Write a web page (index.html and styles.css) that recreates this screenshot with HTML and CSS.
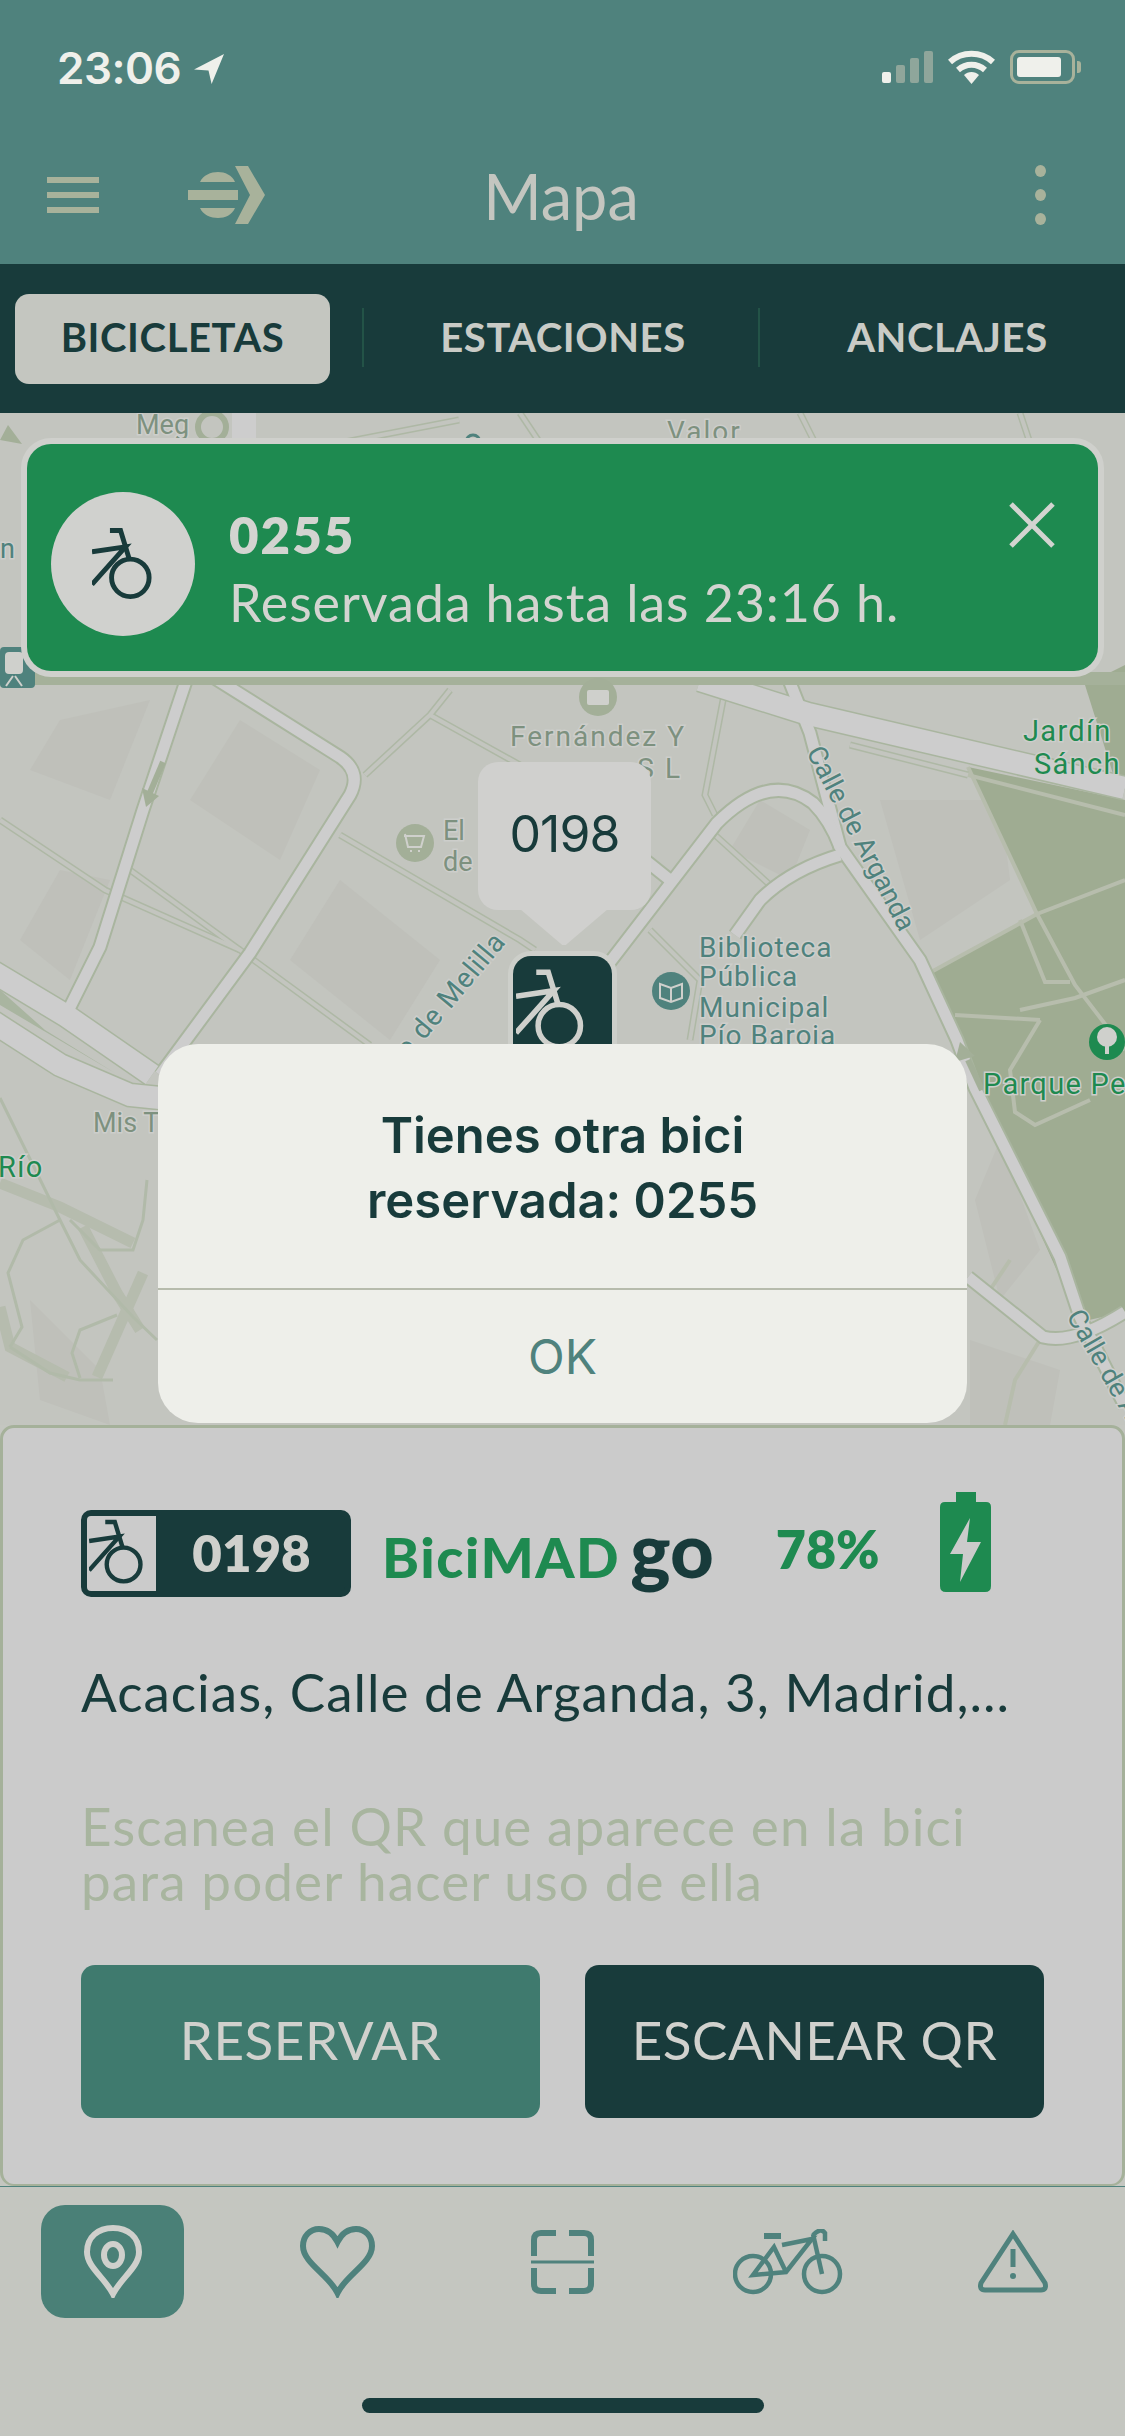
FILE: index.html
```html
<!DOCTYPE html>
<html lang="es">

<head>
    <meta charset="UTF-8">
    <meta name="viewport" content="width=device-width, initial-scale=1.0">
    <title>BiciMAD - Mapa</title>
    <link rel="stylesheet" href="styles.css">
</head>

<body>
    <svg class="defs" width="0" height="0">
        <symbol id="bike-glyph" viewBox="0 0 76 90">
            <path d="M22 4H35L46 40" fill="none" stroke="currentColor" stroke-width="6" />
            <path d="M0 30L41 24L0 70" fill="none" stroke="currentColor" stroke-width="6" />
            <circle cx="47" cy="62" r="23" fill="none" stroke="currentColor" stroke-width="6" />
        </symbol>
    </svg>

    <div class="screen">
        <header class="topbar">
            <div class="status">
                <div class="status-time">
                    <span>23:06</span>
                    <svg width="31" height="31" viewBox="0 0 30 30">
                        <path d="M30 1L1 16L15 17L18 30Z" fill="#eff0eb" />
                    </svg>
                </div>
                <div class="status-icons">
                    <svg width="51" height="32" viewBox="0 0 51 32">
                        <rect x="0" y="21" width="9" height="11" rx="2" fill="#eff0eb" />
                        <rect x="14" y="14" width="9" height="18" rx="2" fill="#8fa69b" />
                        <rect x="28" y="7" width="9" height="25" rx="2" fill="#8fa69b" />
                        <rect x="42" y="0" width="9" height="32" rx="2" fill="#8fa69b" />
                    </svg>
                    <svg width="47" height="34" viewBox="0 0 47 34">
                        <path d="M2 12C14 1 33 1 45 12" fill="none" stroke="#eff0eb" stroke-width="6" />
                        <path d="M10 20C18 13 29 13 37 20" fill="none" stroke="#eff0eb" stroke-width="6" />
                        <path d="M16 25C20 21 27 21 31 25L23.500 34Z" fill="#eff0eb" />
                    </svg>
                    <div class="battery-top"><span class="battery-level"></span></div>
                </div>
            </div>
            <div class="titlebar">
                <div class="burger"><span></span><span></span><span></span></div>
                <svg class="logo" width="77" height="58" viewBox="0 0 77 58">
                    <path d="M12 16C15 9 23 6 30 6C37 6 44 9 47 16Z" fill="#a8b29b" />
                    <path d="M0 24H50V34H0Z" fill="#a8b29b" />
                    <path d="M12 42H47C44 49 37 52 30 52C23 52 15 49 12 42Z" fill="#a8b29b" />
                    <path d="M47 0H60L77 29L60 58H47L62 29Z" fill="#a8b29b" />
                </svg>
                <h1 class="title">Mapa</h1>
                <div class="dots"><span></span><span></span><span></span></div>
            </div>
        </header>

        <nav class="tabs">
            <div class="tab tab-active">BICICLETAS</div>
            <div class="tab tab-mid">ESTACIONES</div>
            <div class="tab tab-last">ANCLAJES</div>
        </nav>

        <main class="map">
            <svg class="map-canvas" viewBox="0 413 1125 1012" width="1125" height="1012">
                <defs>
                    <g id="roads-wide">
                        <path d="M700 680L808 714L1125 788" />
                        <path d="M-10 970L65 1015L152 1075" />
                        <path d="M-10 1020L60 1065L130 1095L160 1098" />
                    </g>
                    <g id="roads-mid">
                        <path d="M188 675L143 810L100 947L70 1007" />
                        <path d="M205 672L340 757Q362 772 350 795L250 953L160 1075" />
                        <path d="M787 675L810 733L840 847L920 960L957 1040L975 1088L1060 1257L1080 1317L1125 1406" />
                        <path d="M600 975L717 823Q770 770 813 803Q830 820 840 847" />
                        <path d="M840 855Q790 870 760 900L735 935" />
                        <path d="M645 860L670 880" />
                        <path d="M968 1277L1043 1337Q1073 1345 1125 1312" />
                        <path d="M244 413V444" stroke-width="24" />
                        <path d="M600 1000L520 1100" />
                    </g>
                    <g id="roads-minor">
                        <path d="M0 820L105 890L240 950L370 1045" />
                        <path d="M130 870L240 950" />
                        <path d="M340 835L520 940L535 950" />
                        <path d="M365 775L430 715L450 690" />
                        <path d="M430 715L520 765" />
                        <path d="M725 690L705 795L715 815" />
                        <path d="M715 835L770 885" />
                        <path d="M650 930L700 980L690 1040" />
                        <path d="M850 745L968 775" />
                        <path d="M340 443L459 420" />
                        <path d="M520 413L540 443" />
                        <path d="M1020 413L1030 443" />
                        <path d="M800 413L815 443" />
                    </g>
                </defs>

                <rect x="0" y="413" width="1125" height="1012" fill="#c3c5bf" />

                <polygon class="building" points="60,720 150,700 110,800 30,770" />
                <polygon class="building" points="240,720 320,770 280,860 190,800" />
                <polygon class="building" points="60,870 110,880 70,980 20,940" />
                <polygon class="building" points="340,880 440,960 390,1040 290,960" />
                <polygon class="building" points="760,800 810,830 790,880 730,850" />
                <polygon class="building" points="880,800 1000,800 1010,880 920,940" />
                <polygon class="building" points="1000,1140 1040,1250 1000,1300 975,1200" />
                <polygon class="building" points="970,1340 1060,1370 1050,1425 970,1425" />
                <polygon class="building" points="30,1300 100,1370 110,1425 40,1400" />

                <polygon class="park" points="968,767 1125,800 1125,1312 1080,1322 975,1088 933,971 1037,914" />
                <polygon class="park" points="1085,685 1125,665 1125,790 1115,780" />

                <path class="park-path" d="M850 745L1125 815" />
                <path class="park-path" d="M968 767L1037 914L1075 985L1125 1050" />
                <path class="park-path" d="M933 971L1037 914L1125 880" />
                <path class="park-path" d="M1020 1010L1075 998L1125 980" />
                <path class="park-path" d="M955 1015L1040 1020" />
                <path class="park-path" d="M1040 1020L1010 1070L1015 1112L1035 1125L1090 1100" />
                <path class="park-path" d="M1020 920L1045 982H1070" />
                <path class="park-path" d="M1010 1260L990 1290" />
                <path class="park-path" d="M1040 1340L1015 1380L1005 1425" />

                <path class="strip" d="M0 1183L60 1207L133 1243" />
                <path class="strip" d="M83 1227L117 1293L140 1330" />
                <path class="strip" d="M143 1273L97 1377" />
                <path class="strip" d="M0 1307L10 1347L67 1377" />
                <path class="thin" d="M0 1098L60 1220L80 1260L133 1317L157 1340" />
                <path class="thin" d="M60 1220L23 1240L8 1273L22 1327L10 1347" />
                <path class="thin" d="M70 1220L100 1250L133 1250L143 1220L147 1180" />
                <path class="thin" d="M117 1315L80 1330L72 1353L80 1378" />
                <path class="thin" d="M10 1347L50 1373L80 1380L113 1380" />

                <use href="#roads-minor" class="road-minor-casing" />
                <use href="#roads-minor" class="road-minor" />
                <use href="#roads-mid" class="road-casing road-casing-mid" />
                <use href="#roads-wide" class="road-casing road-casing-wide" />
                <use href="#roads-mid" class="road road-mid" />
                <use href="#roads-wide" class="road road-wide" />
                <polygon class="median" points="0,990 0,1005 115,1073 45,1030" />

                <path class="arrow-shaft" d="M163 762L149 795" />
                <path class="arrow-head" d="M146 807L142 788L159 796Z" />
                <path class="arrow-shaft" d="M982 1090L968 1060" />
                <path class="arrow-head" d="M960 1042L955 1062L975 1056Z" />
                <path class="arrow-head" d="M0 440L22 444L8 425Z" />
                <rect x="0" y="672" width="1125" height="13" fill="#a5b19a" />

                <!-- teal train stop under the banner edge -->
                <rect x="0" y="647" width="35" height="41" rx="4" fill="#4f827d" />
                <rect x="5" y="652" width="18" height="22" rx="4" fill="#cfd0cc" />
                <path d="M6 686L13 676M22 686L15 676" stroke="#cfd0cc" stroke-width="2" />

                <circle cx="598" cy="697" r="19" fill="#a3af98" />
                <rect x="587" y="690" width="22" height="15" rx="2" fill="#cfd0cc" />
                <circle cx="415" cy="843" r="19" fill="#a3af98" />
                <path d="M404 836H424L421 847H408L405 834M410 851H412M418 851H420" fill="none" stroke="#cfd0cc" stroke-width="2" />
                <circle cx="671" cy="991" r="19" fill="#4f827d" />
                <path d="M660 984L671 988L682 984V998L671 1002L660 998ZM671 988V1002" fill="none" stroke="#cfd0cc" stroke-width="2" />
                <circle cx="1107" cy="1042" r="18" fill="#1e8a50" />
                <path d="M1107 1054V1042" stroke="#cfd0cc" stroke-width="4" />
                <circle cx="1107" cy="1037" r="10" fill="#cfd0cc" />
                <circle cx="212" cy="427" r="14" fill="none" stroke="#a3af98" stroke-width="6" />
                <circle cx="473" cy="442" r="7" fill="none" stroke="#4f827d" stroke-width="3" />

                <text class="lbl lbl-grey" x="136" y="434">Meg</text>
                <text class="lbl lbl-grey lbl-spaced" x="667" y="441">Valor</text>
                <text class="lbl lbl-grey lbl-spaced" x="598" y="746" text-anchor="middle">Fernández Y</text>
                <text class="lbl lbl-grey lbl-spaced" x="682" y="778" text-anchor="end">S L</text>
                <text class="lbl lbl-grey" x="443" y="840">El</text>
                <text class="lbl lbl-grey" x="443" y="871">de</text>
                <text class="lbl lbl-grey" x="93" y="1132">Mis T</text>
                <text class="lbl lbl-teal" x="0" y="558">n</text>
                <text class="lbl lbl-teal lbl-wide" x="699" y="957">Biblioteca</text>
                <text class="lbl lbl-teal lbl-wide" x="699" y="986">Pública</text>
                <text class="lbl lbl-teal lbl-wide" x="699" y="1017">Municipal</text>
                <text class="lbl lbl-teal lbl-wide" x="699" y="1045">Pío Baroja</text>
                <text class="lbl lbl-teal" transform="translate(806 752) rotate(62.500)">Calle de Arganda</text>
                <text class="lbl lbl-teal" transform="translate(1066 1316) rotate(60)">Calle de A</text>
                <text class="lbl lbl-teal lbl-wide" text-anchor="end" transform="translate(507 942) rotate(-50)">e de Melilla</text>
                <text class="lbl lbl-green" x="1023" y="741">Jardín</text>
                <text class="lbl lbl-green" x="1034" y="774">Sánch</text>
                <text class="lbl lbl-green" x="983" y="1094">Parque Pe</text>
                <text class="lbl lbl-green" x="-2" y="1177">Río</text>
            </svg>

            <section class="banner">
                <div class="banner-icon">
                    <svg width="62" height="74">
                        <use href="#bike-glyph" />
                    </svg>
                </div>
                <div class="banner-text">
                    <div class="banner-id">0255</div>
                    <div class="banner-msg">Reservada hasta las 23:16 h.</div>
                </div>
                <svg class="banner-close" width="46" height="46" viewBox="0 0 46 46">
                    <path d="M2 2L44 44M44 2L2 44" stroke="#d3d4d0" stroke-width="5" />
                </svg>
            </section>

            <div class="bubble">0198</div>
            <div class="marker">
                <svg width="70" height="84">
                    <use href="#bike-glyph" />
                </svg>
            </div>

            <section class="dialog">
                <div class="dialog-title">Tienes otra bici<br>reservada: 0255</div>
                <div class="dialog-ok">OK</div>
            </section>
        </main>

        <section class="sheet">
            <div class="bike-row">
                <div class="chip">
                    <div class="chip-icon">
                        <svg width="56" height="66">
                            <use href="#bike-glyph" />
                        </svg>
                    </div>
                    <div class="chip-id">0198</div>
                </div>
                <div class="brand"><span class="brand-name">BiciMAD</span><span class="brand-go">go</span></div>
                <div class="charge">78%</div>
                <svg class="battery-big" width="51" height="100" viewBox="0 0 51 100">
                    <path d="M16 0H36V10H46Q51 10 51 15V94Q51 100 45 100H6Q0 100 0 94V15Q0 10 5 10H16Z" fill="#1e8a50" />
                    <path d="M30 26L10 62H23L20 90L41 50H27Z" fill="#cbcbcb" />
                </svg>
            </div>
            <p class="address">Acacias, Calle de Arganda, 3, Madrid,...</p>
            <p class="hint">Escanea el QR que aparece en la bici<br>para poder hacer uso de ella</p>
            <div class="actions">
                <div class="btn btn-reserve">RESERVAR</div>
                <div class="btn btn-scan">ESCANEAR QR</div>
            </div>
        </section>

        <footer class="nav">
            <div class="nav-row">
                <div class="nav-item nav-active">
                    <svg width="60" height="73" viewBox="0 0 60 73">
                        <path d="M30 69C22 53 4 42 4 27C4 12 15 3 30 3C45 3 56 12 56 27C56 42 38 53 30 69Z" fill="none" stroke="#cfd0cc" stroke-width="6" />
                        <ellipse cx="30" cy="30" rx="9" ry="11" fill="none" stroke="#cfd0cc" stroke-width="6" />
                    </svg>
                </div>
                <div class="nav-item">
                    <svg width="77" height="72" viewBox="0 0 77 72">
                        <path d="M38.500 67C30 49 4 37 4 20C4 10 11 3 20 3C29 3 35 9 38.500 16C42 9 48 3 57 3C66 3 73 10 73 20C73 37 47 49 38.500 67Z" fill="none" stroke="#4f827d" stroke-width="6" />
                    </svg>
                </div>
                <div class="nav-item">
                    <svg width="63" height="64" viewBox="0 0 63 64">
                        <path d="M3 26V10Q3 3 10 3H25M38 3H53Q60 3 60 10V26M3 38V54Q3 61 10 61H25M38 61H53Q60 61 60 54V38" fill="none" stroke="#4f827d" stroke-width="6" />
                        <path d="M0 32H63" stroke="#4f827d" stroke-width="3" />
                    </svg>
                </div>
                <div class="nav-item">
                    <svg width="110" height="66" viewBox="0 0 110 66">
                        <g fill="none" stroke="#4f827d" stroke-width="4.500">
                            <circle cx="20" cy="45" r="18" />
                            <circle cx="89" cy="45" r="18" />
                            <path d="M49 16L79 10L53 43L20 46L41 18L53 43" />
                            <path d="M80 5L89 45" />
                            <path d="M80 6Q88 -2 92 4V12" />
                        </g>
                        <path d="M31 7H48" stroke="#4f827d" stroke-width="6" />
                    </svg>
                </div>
                <div class="nav-item">
                    <svg width="72" height="64" viewBox="0 0 72 64">
                        <path d="M36 4L68 53Q70 60 64 60H8Q2 60 4 53Z" fill="none" stroke="#4f827d" stroke-width="5" />
                        <path d="M36 19V37" stroke="#4f827d" stroke-width="5" />
                        <circle cx="36" cy="46" r="3" fill="#4f827d" />
                    </svg>
                </div>
            </div>
            <div class="home-bar"></div>
        </footer>
    </div>
</body>

</html>
```

FILE: styles.css
```css
* {
    box-sizing: border-box;
}

body {
    margin: 0;
    padding: 0;
    font-family: "Lato", sans-serif;
    background-color: #c4c6c0;
}

.defs {
    position: absolute;
}

.screen {
    width: 1125px;
    height: 2436px;
    display: flex;
    flex-direction: column;
    overflow: hidden;
}

/* top bar */
.topbar {
    height: 264px;
    background-color: #4f827d;
    display: flex;
    flex-direction: column;
}

.status {
    height: 136px;
    padding: 50px 50px 0 57px;
    display: flex;
    justify-content: space-between;
    align-items: flex-start;
}

.status-time {
    display: flex;
    align-items: center;
    gap: 12px;
    font-family: "Inter", sans-serif;
    font-weight: 600;
    font-size: 44px;
    line-height: 36px;
    letter-spacing: -0.5px;
    color: #eff0eb;
}

.status-icons {
    display: flex;
    align-items: center;
    gap: 15px;
}

.battery-top {
    width: 65px;
    height: 34px;
    margin-left: 0;
    padding: 4px;
    border: 3px solid #a8b29b;
    border-radius: 9px;
    position: relative;
}

.battery-top::after {
    content: "";
    position: absolute;
    right: -9px;
    top: 8px;
    width: 4px;
    height: 12px;
    border-radius: 0 3px 3px 0;
    background-color: #a8b29b;
}

.battery-level {
    display: block;
    width: 44px;
    height: 100%;
    border-radius: 3px;
    background-color: #eff0eb;
}

.titlebar {
    height: 118px;
    padding: 0 79px 0 47px;
    display: flex;
    align-items: center;
    position: relative;
}

.burger {
    width: 52px;
    display: flex;
    flex-direction: column;
    gap: 9px;
}

.burger span {
    height: 6px;
    background-color: #a8b29b;
}

.logo {
    margin-left: 89px;
}

.title {
    margin: 0;
    flex: 1;
    padding-right: 178px;
    text-align: center;
    font-weight: 400;
    font-size: 63px;
    color: #c4c6c0;
}

.dots {
    display: flex;
    flex-direction: column;
    gap: 12px;
}

.dots span {
    width: 11px;
    height: 12px;
    border-radius: 50%;
    background-color: #a8b29b;
}

/* tabs */
.tabs {
    height: 149px;
    background-color: #183b3b;
    padding: 30px 0 29px 15px;
    display: flex;
}

.tab {
    display: flex;
    align-items: center;
    justify-content: center;
    padding-bottom: 5px;
    font-weight: 700;
    font-size: 40px;
    letter-spacing: 0.6px;
    color: #c9cbc6;
}

.tab-active {
    width: 315px;
    border-radius: 14px;
    background-color: #c4c6c0;
    color: #183b3b;
    margin-right: 32px;
}

.tab-mid,
.tab-last {
    position: relative;
}

.tab-mid {
    width: 396px;
    padding-left: 6px;
}

.tab-last {
    width: 367px;
    padding-left: 12px;
}

.tab-mid::before,
.tab-last::before {
    content: "";
    position: absolute;
    left: 0;
    top: 14px;
    bottom: 17px;
    width: 2px;
    background-color: #235347;
}

/* map */
.map {
    flex: 1;
    position: relative;
}

.map-canvas {
    position: absolute;
    left: 0;
    top: 0;
    display: block;
}

.building {
    fill: #bfc0ba;
}

.park {
    fill: #9fac92;
}

.park-path {
    fill: none;
    stroke: #b7bdad;
    stroke-width: 4;
}

.road {
    fill: none;
    stroke: #cdcdcd;
}

.road-mid {
    stroke-width: 11;
}

.road-wide {
    stroke-width: 22;
}

.road-casing {
    fill: none;
    stroke: #a9b59f;
}

.road-casing-mid {
    stroke-width: 15;
}

.road-casing-wide {
    stroke-width: 25;
}

.road-minor-casing {
    fill: none;
    stroke: #aeb8a5;
    stroke-width: 7;
}

.road-minor {
    fill: none;
    stroke: #c3c5bf;
    stroke-width: 4;
}

.median {
    fill: #a9b5a0;
}

.strip {
    fill: none;
    stroke: #b6bcae;
    stroke-width: 11;
}

.thin {
    fill: none;
    stroke: #b1baa9;
    stroke-width: 3;
}

.arrow-shaft {
    fill: none;
    stroke: #a3af98;
    stroke-width: 6;
}

.arrow-head {
    fill: #a3af98;
}

.lbl {
    font-family: "Roboto", sans-serif;
    font-size: 27px;
    paint-order: stroke;
    stroke: #cdcecb;
    stroke-width: 3px;
}

.lbl-grey {
    fill: #7d917f;
}

.lbl-spaced {
    font-size: 28px;
    letter-spacing: 2px;
}

.lbl-teal {
    fill: #4f827d;
}

.lbl-wide {
    font-size: 28px;
    letter-spacing: 1px;
}

.lbl-green {
    fill: #1e8a50;
    font-size: 29px;
    letter-spacing: 1.3px;
}

.banner {
    position: absolute;
    left: 27px;
    top: 31px;
    width: 1071px;
    height: 227px;
    padding: 48px 43px 0 24px;
    border-radius: 24px;
    background-color: #1e8a50;
    box-shadow: 0 0 0 6px #cfd0cc;
    display: flex;
    align-items: flex-start;
}

.banner-icon {
    width: 144px;
    height: 144px;
    border-radius: 50%;
    background-color: #d0d1ce;
    color: #183b3b;
    display: flex;
    align-items: center;
    justify-content: center;
    flex-shrink: 0;
}

.banner-text {
    flex: 1;
    margin-left: 34px;
    color: #d3d4d0;
}

.banner-id {
    margin-top: 15px;
    font-weight: 800;
    font-size: 51px;
    line-height: 56px;
    letter-spacing: 2px;
}

.banner-msg {
    margin-top: 9px;
    font-size: 52px;
    line-height: 60px;
    letter-spacing: 0.9px;
}

.banner-close {
    margin-top: 10px;
}

.bubble {
    position: absolute;
    left: 478px;
    top: 349px;
    width: 173px;
    height: 148px;
    padding-bottom: 4px;
    border-radius: 20px;
    background-color: #d0d0ce;
    color: #183b3b;
    display: flex;
    align-items: center;
    justify-content: center;
    font-family: "Inter", sans-serif;
    font-size: 50px;
    letter-spacing: -1px;
}

.bubble::after {
    content: "";
    position: absolute;
    left: 42px;
    top: 147px;
    width: 88px;
    height: 36px;
    background-color: #d0d0ce;
    clip-path: polygon(0 0, 100% 0, 52% 100%, 48% 100%);
}

.marker {
    position: absolute;
    left: 513px;
    top: 543px;
    width: 99px;
    height: 120px;
    padding: 12px 0 0 3px;
    border-radius: 18px;
    background-color: #183b3b;
    box-shadow: 0 0 0 5px #cdcfca;
    color: #cfd0cc;
}

.dialog {
    position: absolute;
    left: 158px;
    top: 631px;
    width: 809px;
    height: 379px;
    border-radius: 40px;
    background-color: #eeefea;
    display: flex;
    flex-direction: column;
}

.dialog-title {
    height: 246px;
    padding-top: 59px;
    border-bottom: 2px solid #b6bbac;
    text-align: center;
    font-family: "Inter", sans-serif;
    font-weight: 600;
    font-size: 49px;
    line-height: 65px;
    color: #183b3b;
}

.dialog-ok {
    flex: 1;
    display: flex;
    align-items: center;
    justify-content: center;
    font-family: "Inter", sans-serif;
    font-size: 48px;
    color: #4f827d;
}

/* bottom sheet */
.sheet {
    height: 761px;
    padding: 64px 78px 0 78px;
    border: 3px solid #a5b19a;
    border-bottom-width: 2px;
    border-radius: 14px;
    background-color: #cbcbcb;
}

.bike-row {
    height: 105px;
    display: flex;
    align-items: center;
}

.chip {
    width: 270px;
    height: 87px;
    margin-top: 18px;
    border: 6px solid #183b3b;
    border-radius: 10px;
    background-color: #183b3b;
    display: flex;
}

.chip-icon {
    width: 69px;
    padding: 3px 0 0 2px;
    background-color: #cbcbcb;
    color: #183b3b;
    border-radius: 4px 0 0 4px;
}

.chip-id {
    flex: 1;
    margin-left: 2px;
    text-align: center;
    font-weight: 800;
    font-size: 51px;
    line-height: 73px;
    color: #cfd0cc;
}

.brand {
    margin-left: 31px;
    margin-top: 20px;
    display: flex;
    align-items: baseline;
    font-weight: 900;
}

.brand-name {
    font-size: 56px;
    letter-spacing: 1.5px;
    color: #1e8a50;
}

.brand-go {
    margin-left: 10px;
    font-size: 76px;
    line-height: 60px;
    color: #183b3b;
}

.charge {
    margin-left: 62px;
    margin-top: 8px;
    font-weight: 800;
    font-size: 52px;
    color: #1e8a50;
}

.battery-big {
    margin-left: 60px;
    margin-top: -5px;
}

.address {
    margin: 65px 0 0;
    font-size: 53px;
    line-height: 60px;
    letter-spacing: 1px;
    white-space: nowrap;
    color: #183b3b;
}

.hint {
    margin: 76px 0 0;
    font-size: 53px;
    line-height: 55px;
    letter-spacing: 1.1px;
    white-space: nowrap;
    color: #a8b59f;
}

.actions {
    margin-top: 57px;
    display: flex;
    justify-content: space-between;
    width: 963px;
}

.btn {
    width: 459px;
    height: 153px;
    padding-bottom: 4px;
    border-radius: 14px;
    display: flex;
    align-items: center;
    justify-content: center;
    font-size: 53px;
    letter-spacing: 0.5px;
    color: #d0d1cd;
}

.btn-reserve {
    background-color: #3f7a6e;
}

.btn-scan {
    background-color: #183b3b;
}

/* bottom nav */
.nav {
    flex: 0 0 250px;
    padding-top: 18px;
    border-top: 1px solid #4f827d;
    background-color: #c4c6c0;
    display: flex;
    flex-direction: column;
    align-items: center;
}

.nav-row {
    width: 100%;
    height: 113px;
    display: flex;
}

.nav-item {
    width: 225px;
    display: flex;
    align-items: center;
    justify-content: center;
}

.nav-active {
    flex: 0 0 143px;
    margin: 0 41px;
    border-radius: 24px;
    background-color: #4a8077;
}

.home-bar {
    width: 402px;
    height: 15px;
    margin-top: 80px;
    border-radius: 8px;
    background-color: #183b3b;
}
```
